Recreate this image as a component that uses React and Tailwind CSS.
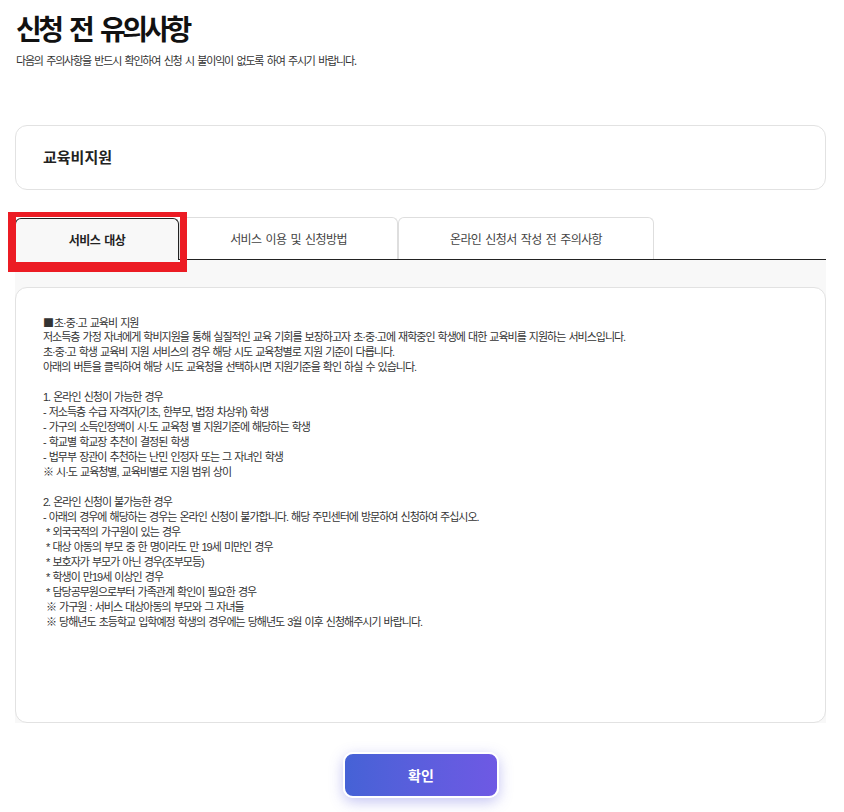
import React, { useState } from 'react';

const tabs = ['서비스 대상', '서비스 이용 및 신청방법', '온라인 신청서 작성 전 주의사항'];
const tabWidths = ['w-[164px]', 'w-[219px]', 'w-[256px]'];

const lines = [
  '초·중·고 교육비 지원',
  '저소득층 가정 자녀에게 학비지원을 통해 실질적인 교육 기회를 보장하고자 초·중·고에 재학중인 학생에 대한 교육비를 지원하는 서비스입니다.',
  '초·중·고 학생 교육비 지원 서비스의 경우 해당 시도 교육청별로 지원 기준이 다릅니다.',
  '아래의 버튼을 클릭하여 해당 시도 교육청을 선택하시면 지원기준을 확인 하실 수 있습니다.',
  '',
  '1. 온라인 신청이 가능한 경우',
  '- 저소득층 수급 자격자(기초, 한부모, 법정 차상위) 학생',
  '- 가구의 소득인정액이 시·도 교육청 별 지원기준에 해당하는 학생',
  '- 학교별 학교장 추천이 결정된 학생',
  '- 법무부 장관이 추천하는 난민 인정자 또는 그 자녀인 학생',
  '※ 시·도 교육청별, 교육비별로 지원 범위 상이',
  '',
  '2. 온라인 신청이 불가능한 경우',
  '- 아래의 경우에 해당하는 경우는 온라인 신청이 불가합니다. 해당 주민센터에 방문하여 신청하여 주십시오.',
  ' * 외국국적의 가구원이 있는 경우',
  ' * 대상 아동의 부모 중 한 명이라도 만 19세 미만인 경우',
  ' * 보호자가 부모가 아닌 경우(조부모등)',
  ' * 학생이 만19세 이상인 경우',
  ' * 담당공무원으로부터 가족관계 확인이 필요한 경우',
  ' ※ 가구원 : 서비스 대상아동의 부모와 그 자녀들',
  ' ※ 당해년도 초등학교 입학예정 학생의 경우에는 당해년도 3월 이후 신청해주시기 바랍니다.',
];

export default function App() {
  const [active, setActive] = useState(0);

  return (
    <div className="min-h-screen bg-white pl-[15px] pr-[18px] pt-[10px] pb-4 font-['Noto_Sans_CJK_KR',sans-serif] text-[#222]">
      {/* Header */}
      <h1 className="text-[28px] leading-[36px] font-bold tracking-[-3.6px] [word-spacing:6px] text-[#111] pl-px">신청 전 유의사항</h1>
      <p className="mt-[6px] text-[11px] leading-[16px] tracking-[-1.2px] [word-spacing:2.2px] text-[#333] pl-px">
        다음의 주의사항을 반드시 확인하여 신청 시 불이익이 없도록 하여 주시기 바랍니다.
      </p>

      {/* Category card */}
      <div className="mt-[57px] h-[65px] flex items-center px-[27px] border border-[#e2e2e2] rounded-xl">
        <span className="text-[15px] font-bold text-[#222]">교육비지원</span>
      </div>

      {/* Tabs */}
      <div className="mt-[28px] flex items-end border-b border-[#222] h-[42px]">
        {tabs.map((t, i) => (
          <button
            key={t}
            onClick={() => setActive(i)}
            className={`relative h-[42px] ${tabWidths[i]} flex items-center justify-center rounded-t-md border border-b-0 text-[12px] tracking-[-0.6px] [word-spacing:2px] ${
              active === i
                ? 'bg-[#f8f8f8] border-[#222] -mb-px font-bold text-[#222] z-10'
                : 'bg-white border-[#dedede] text-[#444]'
            }`}
          >
            {t}
            {i === 0 && (
              <span className="pointer-events-none absolute left-[-8px] top-[-7px] w-[179px] h-[60px] border-t-[5px] border-l-[8px] border-r-[7px] border-b-[10px] border-[#ec1c24]" />
            )}
          </button>
        ))}
      </div>

      {/* Content panel */}
      <div className="bg-[#f8f8f8] pt-[27px]">
        <div className="h-[436px] bg-white border border-[#e2e2e2] rounded-xl px-[27px] pt-[27px] font-['Liberation_Sans','Noto_Sans_CJK_KR',sans-serif]">
          {lines.map((l, i) => (
            <div key={i} className="h-[15px] text-[11px] leading-[15px] tracking-[-1px] [word-spacing:1px] text-[#333] whitespace-pre">
              {i === 0 && <span className="font-['Noto_Sans_CJK_KR',sans-serif] tracking-normal">■</span>}
              {l}
            </div>
          ))}
        </div>
      </div>

      {/* Confirm */}
      <div className="mt-[29px] flex justify-center pl-[1px]">
        <button className="w-[156px] h-[46px] rounded-[10px] border-2 border-white bg-gradient-to-r from-[#4562d6] to-[#6e59e4] text-white text-[14px] font-bold shadow-[0_4px_14px_rgba(90,90,220,0.35)]">
          확인
        </button>
      </div>
    </div>
  );
}
